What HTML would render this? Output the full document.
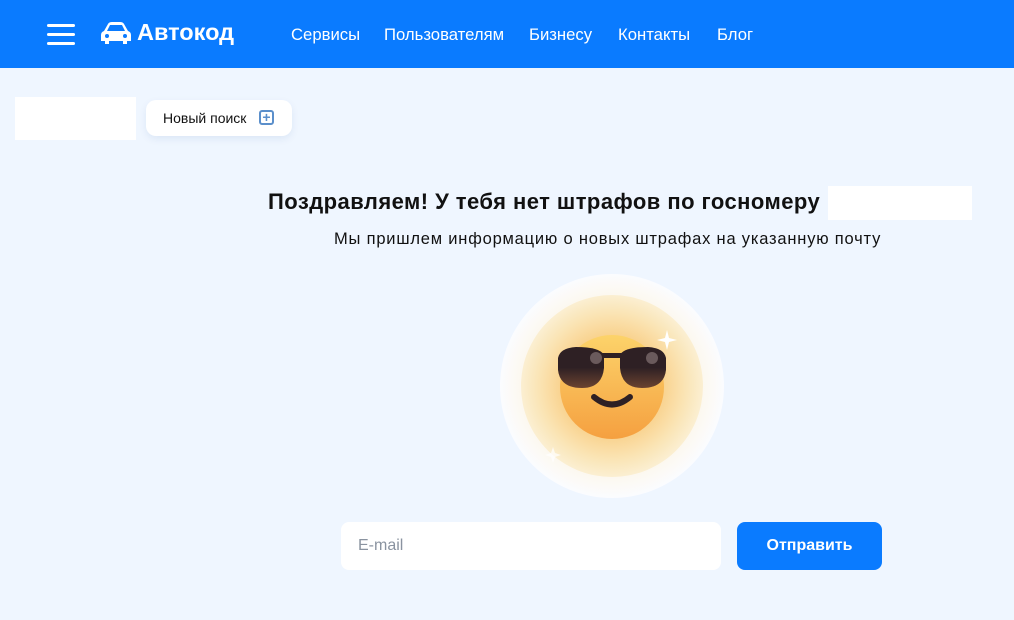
<!DOCTYPE html>
<html><head><meta charset="utf-8"><style>
*{margin:0;padding:0;box-sizing:border-box}
body{width:1014px;height:620px;overflow:hidden;background:#eff6ff;font-family:"Liberation Sans",Arial,sans-serif;position:relative}
.hdr{position:absolute;left:0;top:0;width:1014px;height:68px;background:#0a7bff}
.burger{position:absolute;left:47px;top:24px;width:28px}
.burger div{height:3px;background:#fff;border-radius:2px;margin-bottom:6px}
.logo{position:absolute;left:137px;top:19px;color:#fff;font-size:23.5px;font-weight:bold}
.nav{position:absolute;top:25px;color:#fff;font-size:16.7px}
.wbox{position:absolute;left:15px;top:97px;width:121px;height:43px;background:#fff}
.btn{position:absolute;left:146px;top:100px;width:146px;height:36px;background:#fff;border-radius:10px;box-shadow:0 3px 8px rgba(0,60,140,.08);font-size:14px;color:#111;padding:10px 0 0 17px}
.plus{position:absolute;left:113px;top:10px;width:15px;height:15px;border:2px solid #5b8fcb;border-radius:3px;color:#5b8fcb;font-size:14px;line-height:10px;text-align:center;font-weight:bold}
h1{position:absolute;left:268px;top:189px;font-size:22px;letter-spacing:0.45px;color:#111;font-weight:bold;white-space:nowrap}
.plate{position:absolute;left:828px;top:186px;width:144px;height:34px;background:#fff}
.sub{position:absolute;left:334px;top:230px;font-size:16.5px;letter-spacing:0.8px;color:#111;white-space:nowrap}
.email{position:absolute;left:341px;top:522px;width:380px;height:48px;background:#fff;border-radius:8px;color:#8a93a0;font-size:16px;padding:15px 0 0 17px}
.send{position:absolute;left:737px;top:522px;width:145px;height:48px;background:#0a7bff;border-radius:8px;color:#fff;font-size:16px;font-weight:bold;text-align:center;line-height:48px}
</style></head><body>
<div class="hdr">
<div class="burger"><div></div><div></div><div style="margin:0"></div></div>
<svg style="position:absolute;left:100px;top:21px" width="32" height="24" viewBox="0 0 32 24"><path d="M4 10 L8 3 Q9 1 12 1 H20 Q23 1 24 3 L28 10 Q31 11 31 14 V20 H27 V23 H23 V20 H9 V23 H5 V20 H1 V14 Q1 11 4 10Z" fill="#fff"/><path d="M7 10 L10 4 H22 L25 10Z" fill="#0a7bff"/><circle cx="7" cy="15" r="2" fill="#0a7bff"/><circle cx="25" cy="15" r="2" fill="#0a7bff"/></svg>
<div class="logo">Автокод</div>
<div class="nav" style="left:291px">Сервисы</div>
<div class="nav" style="left:384px">Пользователям</div>
<div class="nav" style="left:529px">Бизнесу</div>
<div class="nav" style="left:618px">Контакты</div>
<div class="nav" style="left:717px">Блог</div>
</div>
<div class="wbox"></div>
<div class="btn">Новый поиск<div class="plus">+</div></div>
<h1>Поздравляем! У тебя нет штрафов по госномеру</h1>
<div class="plate"></div>
<div class="sub">Мы пришлем информацию о новых штрафах на указанную почту</div>
<svg style="position:absolute;left:490px;top:270px" width="240" height="230" viewBox="0 0 240 230">
<defs>
<radialGradient id="g1"><stop offset="0" stop-color="#f7b860"/><stop offset=".55" stop-color="#f9d28e"/><stop offset=".8" stop-color="#fae4b4"/><stop offset="1" stop-color="#fbefd2"/></radialGradient>
<radialGradient id="g0"><stop offset=".7" stop-color="#fdf6e6"/><stop offset="1" stop-color="#fbfcff"/></radialGradient>
<linearGradient id="f" x1="0" y1="0" x2="0" y2="1"><stop offset="0" stop-color="#fcd36a"/><stop offset="1" stop-color="#f5a040"/></linearGradient>
<linearGradient id="gl" x1="0" y1="0" x2="0" y2="1"><stop offset=".5" stop-color="#2e2024"/><stop offset="1" stop-color="#6b4330"/></linearGradient>
</defs>
<circle cx="122" cy="116" r="112" fill="url(#g0)"/>
<circle cx="122" cy="116" r="91" fill="url(#g1)"/>
<ellipse cx="122" cy="117" rx="52" ry="52" fill="url(#f)"/>
<path d="M68 88 Q70 78 86 77 Q110 77 114 85 L114 98 Q112 118 92 118 Q70 118 68 100Z" fill="url(#gl)"/>
<path d="M176 88 Q174 78 158 77 Q134 77 130 85 L130 98 Q132 118 152 118 Q174 118 176 100Z" fill="url(#gl)"/>
<rect x="112" y="83" width="20" height="5" fill="#2e2024"/>
<circle cx="106" cy="88" r="6" fill="#6a5a5c"/><circle cx="162" cy="88" r="6" fill="#6a5a5c"/>
<path d="M104 127 Q122 142 140 127" stroke="#2e2024" stroke-width="6" fill="none" stroke-linecap="round"/>
<path d="M177 60 L179 68 L187 70 L179 72 L177 80 L175 72 L167 70 L175 68Z" fill="#fff"/>
<path d="M63 177 L65 183 L71 185 L65 187 L63 193 L61 187 L55 185 L61 183Z" fill="#fff" opacity=".7"/>
</svg>
<div class="email">E-mail</div>
<div class="send">Отправить</div>
</body></html>
